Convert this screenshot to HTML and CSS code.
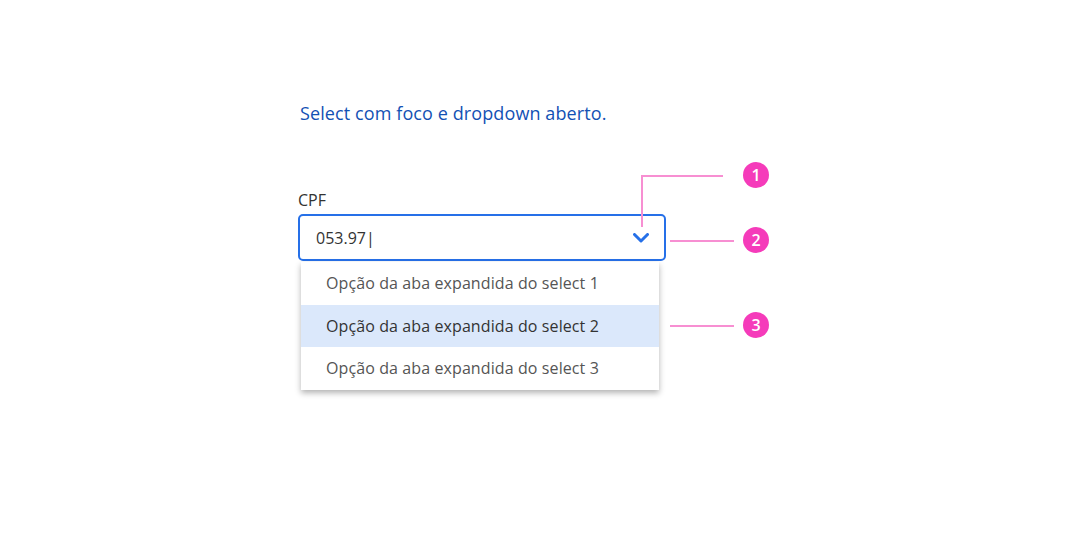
FILE: index.html
```html
<!DOCTYPE html>
<html lang="pt-BR">
<head>
<meta charset="utf-8">
<title>Select</title>
<link rel="stylesheet" href="styles.css">
</head>
<body>
<main class="page">
  <h1 class="title">Select com foco e dropdown aberto.</h1>
  <div class="field">
    <label class="label">CPF</label>
    <div class="input">
      <span class="value">053.97|</span>
      <svg class="chevron" width="16" height="10" viewBox="0 0 16 10"><path d="M1.5 1.5 L8 8 L14.5 1.5" fill="none" stroke="#2670e8" stroke-width="3" stroke-linecap="round" stroke-linejoin="round"/></svg>
    </div>
    <ul class="menu">
      <li class="option">Opção da aba expandida do select 1</li>
      <li class="option option-active">Opção da aba expandida do select 2</li>
      <li class="option">Opção da aba expandida do select 3</li>
    </ul>

    <div class="anno-line line-v1"></div>
    <div class="anno-line line-h1"></div>
    <div class="anno-dot dot-1">1</div>
    <div class="anno-line line-h2"></div>
    <div class="anno-dot dot-2">2</div>
    <div class="anno-line line-h3"></div>
    <div class="anno-dot dot-3">3</div>
  </div>
</main>
</body>
</html>
```

FILE: styles.css
```css
* { box-sizing: border-box; }
html, body { margin: 0; padding: 0; background: #fff; }
body { font-family: "Open Sans", "Lato", sans-serif; }

.page {
  min-height: 544px;
  padding: 100px 0 60px 298px;
}

.title {
  margin: 0 0 0 2px;
  font-size: 18px;
  line-height: 26px;
  font-weight: 400;
  letter-spacing: 0.1px;
  color: #1351b4;
}

.field {
  position: relative;
  margin-top: 64px;
  width: 368px;
}

.label {
  display: block;
  font-size: 16px;
  line-height: 20px;
  color: #333;
  margin-bottom: 4px;
}

.input {
  display: flex;
  align-items: center;
  justify-content: space-between;
  height: 47px;
  border: 2px solid #2670e8;
  border-radius: 5px;
  padding: 0 15px 0 16px;
  font-size: 16px;
  color: #333;
}

.chevron { display: block; }

.menu {
  list-style: none;
  margin: 1px 0 0 3px;
  padding: 0;
  width: 358px;
  background: #fff;
  box-shadow: 0 3px 6px rgba(0,0,0,0.3);
}

.option {
  height: 42.5px;
  display: flex;
  align-items: center;
  padding-left: 25px;
  font-size: 16px;
  letter-spacing: 0.1px;
  color: #555;
}

.option-active {
  background: #dbe8fb;
  color: #333;
}

.anno-line { position: absolute; background: #f78fd2; }
.line-v1 { left: 343px; top: -15px; width: 1.5px; height: 52px; }
.line-h1 { left: 343px; top: -15px; width: 82px; height: 1.5px; }
.line-h2 { left: 372px; top: 50px; width: 64px; height: 1.5px; }
.line-h3 { left: 372px; top: 135px; width: 64px; height: 1.5px; }

.anno-dot {
  position: absolute;
  left: 445px;
  width: 26px;
  height: 26px;
  border-radius: 50%;
  background: #f53bba;
  color: #fff;
  font-size: 16px;
  font-weight: 600;
  line-height: 26px;
  text-align: center;
}
.dot-1 { top: -28px; }
.dot-2 { top: 37px; }
.dot-3 { top: 122px; }
```
